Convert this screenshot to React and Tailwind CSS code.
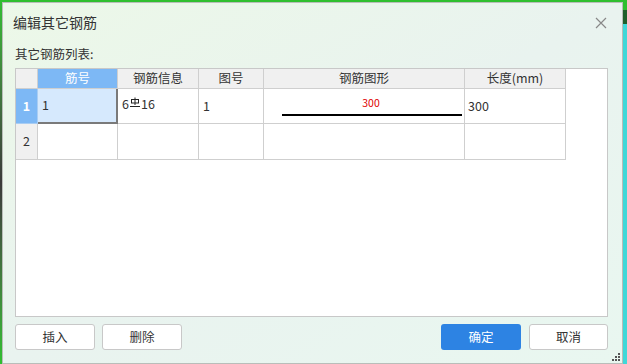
import React from "react";

const font = { fontFamily: '"Noto Sans CJK SC", "Noto Sans", sans-serif' };

function RebarSym() {
  return (
    <svg width="10" height="11" viewBox="0 0 10 11" className="inline-block mx-[1px] -mt-[4px] align-middle">
      <g stroke="#222" strokeWidth="1" fill="none">
        <line x1="5" y1="0.5" x2="5" y2="8" />
        <rect x="1.5" y="2.5" width="7" height="3.5" />
        <line x1="0" y1="9.5" x2="10" y2="9.5" />
      </g>
    </svg>
  );
}

export default function App() {
  const cols = ["w-[80px]", "w-[81px]", "w-[65px]", "w-[201px]", "w-[101px]"];
  return (
    <div className="w-[627px] h-[364px] overflow-hidden bg-[#2fbf2f] flex text-[#333]" style={font}>
      <div className="w-[2px] shrink-0 bg-gradient-to-b from-[#2fbf2f] via-[#3a3a3a] to-[#2fbf2f]" />
      <div className="flex-1 flex flex-col pt-[2px]">
        <div className="relative flex-1 flex flex-col border border-[#b9bdb9] bg-gradient-to-br from-[#ecf8e8] via-[#e9f3ef] to-[#e9f7f0] pl-[12px] pr-[14px]">
          <div className="h-[38px] flex items-center justify-between text-[14px] text-[#333] -mr-[2px]">
            <span className="-ml-[2px]">编辑其它钢筋</span>
            <svg width="12" height="12" viewBox="0 0 12 12" className="mr-[3px] mt-[1px]">
              <path d="M1 1 L11 11 M11 1 L1 11" stroke="#888" strokeWidth="1.2" />
            </svg>
          </div>
          <div className="h-[26px] text-[12.5px] leading-none flex items-center text-[#333]">其它钢筋列表:</div>
          <div className="h-[249px] bg-white border border-[#c8c8c8] mt-[1px]">
            <div className="flex h-[20px] text-[12.5px]">
              <div className="w-[22px] bg-[#f0f0f0] border-r border-b border-[#cfcfcf]" />
              {["筋号", "钢筋信息", "图号", "钢筋图形", "长度(mm)"].map((h, i) => (
                <div
                  key={h}
                  className={`${cols[i]} flex items-center justify-center border-r border-b border-[#cfcfcf] ${
                    i === 0 ? "bg-[#7db8f5] text-white border-[#a9cdf3]" : "bg-[#f0f0f0] text-[#333]"
                  }`}
                >
                  {h}
                </div>
              ))}
            </div>
            <div className="flex h-[35px] text-[12.5px]">
              <div className="w-[22px] bg-[#7db8f5] text-white font-bold flex items-center justify-center border-r border-b border-[#a9cdf3]">1</div>
              <div className="w-[80px] bg-[#d6e9fd] border-r-2 border-b-2 border-[#7a7a7a] flex items-center pl-[4px]">1</div>
              <div className="w-[81px] border-r border-b border-[#cfcfcf] flex items-center pl-[4px] pb-[3px]">
                6<RebarSym />16
              </div>
              <div className="w-[65px] border-r border-b border-[#cfcfcf] flex items-center pl-[4px]">1</div>
              <div className="w-[201px] border-r border-b border-[#cfcfcf] flex flex-col items-center pt-[9px]">
                <span className="text-[10.5px] leading-none text-[#e00000] ml-[14px]">300</span>
                <div className="w-[180px] h-[2px] bg-black mt-[5px] ml-[16px]" />
              </div>
              <div className="w-[101px] border-r border-b border-[#cfcfcf] flex items-center pl-[3px]">300</div>
            </div>
            <div className="flex h-[36px] text-[12.5px]">
              <div className="w-[22px] bg-[#f0f0f0] text-[#333] flex items-center justify-center border-r border-b border-[#cfcfcf]">2</div>
              {cols.map((c, i) => (
                <div key={i} className={`${c} border-r border-b border-[#cfcfcf]`} />
              ))}
            </div>
          </div>
          <div className="flex items-center mt-[7px] text-[12.5px]">
            <button className="w-[80px] h-[26px] bg-white border border-[#c8c8c8] rounded-[3px]">插入</button>
            <button className="w-[80px] h-[26px] bg-white border border-[#c8c8c8] rounded-[3px] ml-[7px]">删除</button>
            <div className="flex-1" />
            <button className="w-[80px] h-[26px] bg-[#2d83e3] text-white rounded-[3px]">确定</button>
            <button className="w-[79px] h-[26px] bg-white border border-[#c8c8c8] rounded-[3px] ml-[8px]">取消</button>
          </div>
          <svg width="8" height="8" viewBox="0 0 8 8" className="absolute right-[2px] bottom-[2px]">
            <g fill="#555">
              <rect x="6" y="0" width="2" height="2" />
              <rect x="3" y="3" width="2" height="2" />
              <rect x="6" y="3" width="2" height="2" />
              <rect x="0" y="6" width="2" height="2" />
              <rect x="3" y="6" width="2" height="2" />
              <rect x="6" y="6" width="2" height="2" />
            </g>
          </svg>
        </div>
      </div>
      <div className="w-[4px] shrink-0 flex flex-col">
        <div className="h-[10px] bg-[#2fbf2f]" />
        <div className="h-[14px] bg-[#1f5f2a]" />
        <div className="flex-1 bg-[#3fd8d8]" />
      </div>
    </div>
  );
}
